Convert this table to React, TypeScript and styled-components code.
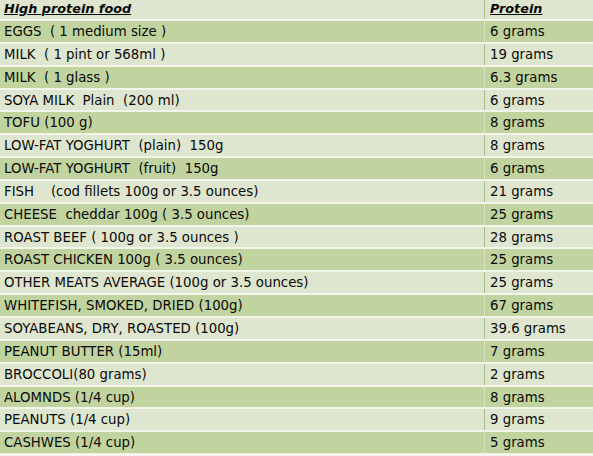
import React from "react";
import styled, { createGlobalStyle } from "styled-components";

const Global = createGlobalStyle`
  html, body { margin: 0; padding: 0; background: #dfe6d0; }
  body { font-family: "DejaVu Sans", Verdana, sans-serif; }
`;

const Table = styled.div`
  width: 593px;
  height: 456px;
  overflow: hidden;
  background: #f2f5ea;
  display: flex;
  flex-direction: column;
  gap: 2px;
`;

const Row = styled.div<{ $tone: "head" | "green" | "light" }>`
  display: grid;
  grid-template-columns: 484px 1px 1fr;
  height: ${(p) => (p.$tone === "head" ? "19px" : "20.85px")};
  flex-shrink: 0;
  background: ${(p) =>
    p.$tone === "green" ? "#c1d39f" : "#dfe6d0"};
  color: #0a0a0a;
  font-size: 13.3px;
  line-height: ${(p) => (p.$tone === "head" ? "18px" : "21px")};
`;

const Divider = styled.div<{ $tone: "head" | "green" | "light" }>`
  background: ${(p) => (p.$tone === "green" ? "#d6e2c0" : "#a8bd86")};
`;

const Cell = styled.div`
  padding-left: 4px;
  white-space: pre;
  overflow: hidden;
`;

const ValueCell = styled(Cell)`
  padding-left: 5px;
`;

const HeadText = styled.span`
  font-weight: bold;
  font-style: italic;
  text-decoration: underline;
  font-size: 12.8px;
`;

const data: [string, string][] = [
  ["EGGS  ( 1 medium size )", "6 grams"],
  ["MILK  ( 1 pint or 568ml )", "19 grams"],
  ["MILK  ( 1 glass )", "6.3 grams"],
  ["SOYA MILK  Plain  (200 ml)", "6 grams"],
  ["TOFU (100 g)", "8 grams"],
  ["LOW-FAT YOGHURT  (plain)  150g", "8 grams"],
  ["LOW-FAT YOGHURT  (fruit)  150g", "6 grams"],
  ["FISH    (cod fillets 100g or 3.5 ounces)", "21 grams"],
  ["CHEESE  cheddar 100g ( 3.5 ounces)", "25 grams"],
  ["ROAST BEEF ( 100g or 3.5 ounces )", "28 grams"],
  ["ROAST CHICKEN 100g ( 3.5 ounces)", "25 grams"],
  ["OTHER MEATS AVERAGE (100g or 3.5 ounces)", "25 grams"],
  ["WHITEFISH, SMOKED, DRIED (100g)", "67 grams"],
  ["SOYABEANS, DRY, ROASTED (100g)", "39.6 grams"],
  ["PEANUT BUTTER (15ml)", "7 grams"],
  ["BROCCOLI(80 grams)", "2 grams"],
  ["ALOMNDS (1/4 cup)", "8 grams"],
  ["PEANUTS (1/4 cup)", "9 grams"],
  ["CASHWES (1/4 cup)", "5 grams"],
];

export default function App() {
  return (
    <>
      <Global />
      <Table>
        <Row $tone="head">
          <Cell>
            <HeadText>High protein food</HeadText>
          </Cell>
          <Divider $tone="head" />
          <ValueCell>
            <HeadText>Protein</HeadText>
          </ValueCell>
        </Row>
        {data.map(([food, protein], i) => {
          const tone = i % 2 === 0 ? "green" : "light";
          return (
            <Row key={i} $tone={tone}>
              <Cell>{food}</Cell>
              <Divider $tone={tone} />
              <ValueCell>{protein}</ValueCell>
            </Row>
          );
        })}
      </Table>
    </>
  );
}
